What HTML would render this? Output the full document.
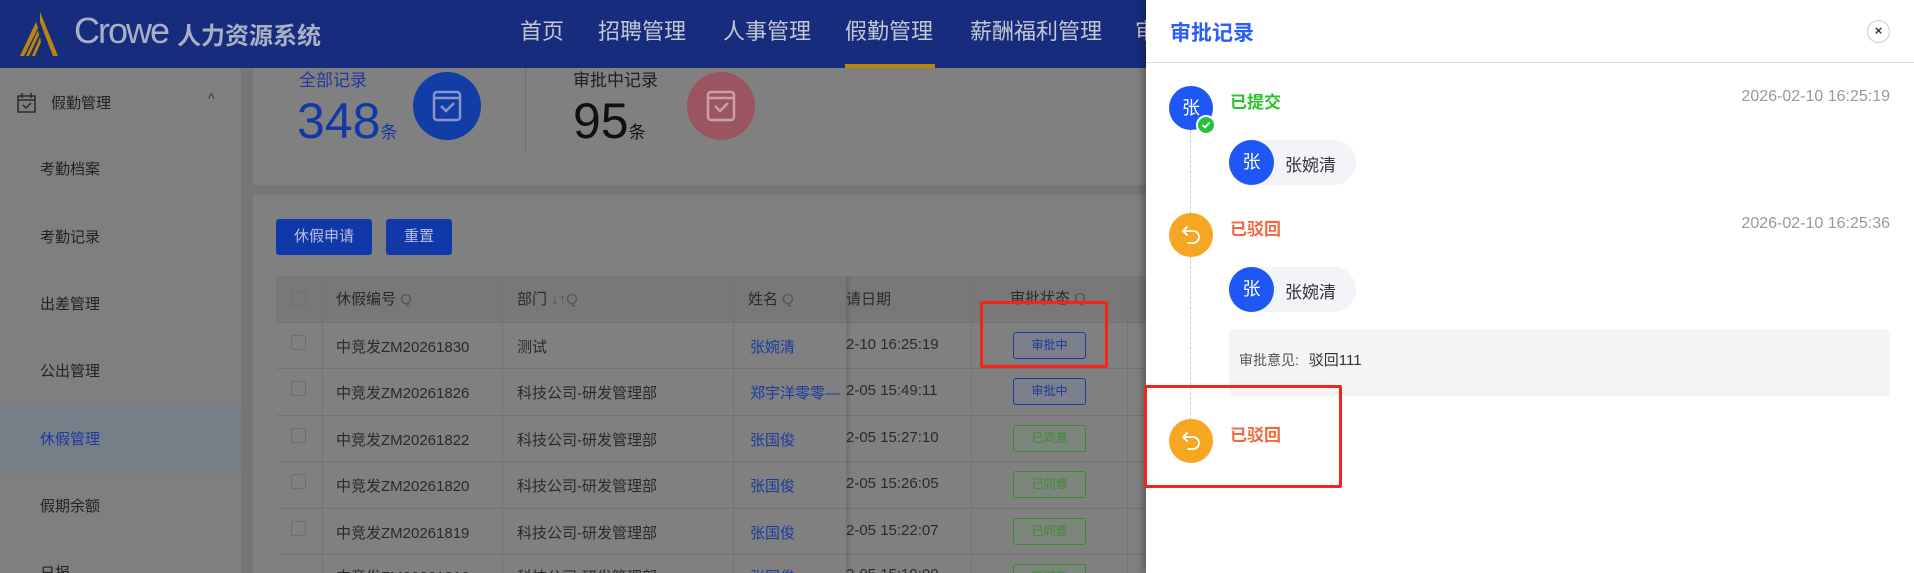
<!DOCTYPE html>
<html style="width:1914px;height:573px;overflow:hidden"><head><meta charset="utf-8"><style>
*{margin:0;padding:0;box-sizing:border-box}
body{width:1914px;height:573px;overflow:hidden;background:#767676;font-family:"Liberation Sans","Noto Sans CJK SC",sans-serif;position:relative;color:#1e1e1e}
.a{position:absolute;white-space:nowrap}
.hdr{left:0;top:0;width:1914px;height:68px;background:#172c7c}
.nav{top:14px;font-size:22px;color:#c4c7d2}
.side{left:0;top:68px;width:241px;height:505px;background:#7f7f7f}
.si{left:40px;font-size:15px;color:#222}
.card{background:#808080}
.th{font-size:15px;color:#2a2a2a}
.td{font-size:15px;color:#2a2a2a}
.nm{color:#1a3aa0}
.tag{width:73px;height:27px;border:1px solid;border-radius:3px;font-size:12px;text-align:center;line-height:25px}
.tb{border-color:#1a3aa0;color:#1a3aa0;background:#7c7f8c}
.tg{border-color:#3c8a2e;color:#3c8a2e;background:#7c867c}
.hl{height:1px;background:#747474}
.vl{width:1px;background:#747474}
.panel{left:1146px;top:0;width:768px;height:573px;background:#fff;box-shadow:-3px 0 8px rgba(0,0,0,.3)}
.av{width:44px;height:44px;border-radius:50%;background:#1f57f5;color:#fff;font-size:18px;text-align:center;line-height:44px}
.ov{background:#f5a623}
.chip{width:127px;height:45px;border-radius:23px;background:#f2f4f8}
</style></head><body>
<div class="a hdr"></div>
<svg class="a" style="left:16px;top:10px" width="50" height="48" viewBox="0 0 50 48"><path d="M24 2 L42 46 L37 46 L24 12 Z" fill="#b8860b"/><path d="M20 12 L4 46 L8 46 L22 18Z" fill="#b8860b"/><path d="M22 20 L10 46 L13 46 L23 25Z" fill="#b8860b"/><path d="M24 27 L16 46 L19 46 L25 32Z" fill="#b8860b"/></svg>
<div class="a" style="left:74px;top:10px;font-size:36px;color:#a9afc4;letter-spacing:-2px">Crowe</div>
<div class="a" style="left:177px;top:16px;font-size:24px;font-weight:bold;color:#a9afc4">人力资源系统</div>
<div class="a nav" style="left:520px">首页</div>
<div class="a nav" style="left:598px">招聘管理</div>
<div class="a nav" style="left:723px">人事管理</div>
<div class="a nav" style="left:845px">假勤管理</div>
<div class="a" style="left:845px;top:64px;width:90px;height:4px;background:#b8860b"></div>
<div class="a nav" style="left:970px">薪酬福利管理</div>
<div class="a nav" style="left:1135px">审</div>

<div class="a side"></div>
<svg class="a" style="left:16px;top:92px" width="22" height="22" viewBox="0 0 22 22" fill="none" stroke="#2a2a2a" stroke-width="1.5"><rect x="2" y="4" width="17" height="16"/><path d="M6 1v5M15 1v5M2 8h17M7 13l3 3 5-5"/></svg>
<div class="a si" style="left:51px;top:92px">假勤管理</div>
<div class="a" style="left:208px;top:90px;font-size:14px;color:#333">^</div>
<div class="a si" style="top:158px">考勤档案</div>
<div class="a si" style="top:226px">考勤记录</div>
<div class="a si" style="top:293px">出差管理</div>
<div class="a si" style="top:360px">公出管理</div>
<div class="a" style="left:0;top:406px;width:241px;height:67px;background:#767e87"></div>
<div class="a si" style="top:428px;color:#1a3aa0">休假管理</div>
<div class="a si" style="top:495px">假期余额</div>
<div class="a si" style="top:562px">日报</div>

<div class="a card" style="left:253px;top:68px;width:900px;height:117px"></div>
<div class="a" style="left:299px;top:66px;font-size:17px;color:#1a3aa0">全部记录</div>
<div class="a" style="left:297px;top:92px;font-size:50px;color:#1238a8">348<span style="font-size:17px">条</span></div>
<div class="a" style="left:413px;top:72px;width:68px;height:68px;border-radius:50%;background:#123ca6"></div>
<svg class="a" style="left:429px;top:88px" width="36" height="36" viewBox="0 0 36 36" fill="none" stroke="#8a96c4" stroke-width="2.5"><rect x="5" y="4" width="26" height="28" rx="3"/><path d="M5 10h26M12 18l5 5 8-8"/></svg>
<div class="a vl" style="left:525px;top:68px;height:86px;background:#6e6e6e"></div>
<div class="a" style="left:573px;top:66px;font-size:17px;color:#1e1e1e">审批中记录</div>
<div class="a" style="left:573px;top:92px;font-size:50px;color:#111">95<span style="font-size:17px">条</span></div>
<div class="a" style="left:687px;top:72px;width:68px;height:68px;border-radius:50%;background:#9a5560"></div>
<svg class="a" style="left:703px;top:88px" width="36" height="36" viewBox="0 0 36 36" fill="none" stroke="#c8a0a6" stroke-width="2.5"><rect x="5" y="4" width="26" height="28" rx="3"/><path d="M5 10h26M12 18l5 5 8-8"/></svg>

<div class="a card" style="left:253px;top:195px;width:900px;height:378px"></div>
<div class="a" style="left:276px;top:219px;width:96px;height:36px;border-radius:3px;background:#1138a8;color:#b8c0de;font-size:15px;text-align:center;line-height:36px">休假申请</div>
<div class="a" style="left:386px;top:219px;width:66px;height:36px;border-radius:3px;background:#1138a8;color:#b8c0de;font-size:15px;text-align:center;line-height:36px">重置</div>

<div class="a" style="left:276px;top:276px;width:870px;height:46px;background:#787878"></div>
<div class="a hl" style="left:276px;top:322px;width:870px"></div>
<div class="a hl" style="left:276px;top:368px;width:870px"></div>
<div class="a hl" style="left:276px;top:415px;width:870px"></div>
<div class="a hl" style="left:276px;top:461px;width:870px"></div>
<div class="a hl" style="left:276px;top:508px;width:870px"></div>
<div class="a hl" style="left:276px;top:554px;width:870px"></div>
<div class="a vl" style="left:322px;top:276px;height:297px"></div>
<div class="a vl" style="left:502px;top:276px;height:297px"></div>
<div class="a vl" style="left:733px;top:276px;height:297px"></div>
<div class="a vl" style="left:971px;top:276px;height:297px"></div>
<div class="a vl" style="left:1127px;top:276px;height:297px"></div>
<div class="a" style="left:846px;top:276px;width:6px;height:297px;background:linear-gradient(90deg,rgba(0,0,0,.12),rgba(0,0,0,0))"></div>

<div class="a th" style="left:336px;top:288px">休假编号 <span style="color:#555">Q</span></div>
<div class="a th" style="left:517px;top:288px">部门 <span style="color:#555">↓↑Q</span></div>
<div class="a th" style="left:748px;top:288px">姓名 <span style="color:#555">Q</span></div>
<div class="a th" style="left:846px;top:288px">请日期</div>
<div class="a th" style="left:1010px;top:287px">审批状态 <span style="color:#555">Q</span></div>

<div style="position:absolute;left:0;top:0">
<div class="a td" style="left:336px;top:336px">中竞发ZM20261830</div><div class="a td" style="left:517px;top:336px">测试</div><div class="a td nm" style="left:750px;top:336px">张婉清</div><div class="a td" style="left:846px;top:336px">2-10 16:25:19</div><div class="a tag tb" style="left:1013px;top:332px">审批中</div>
<div class="a td" style="left:336px;top:382px">中竞发ZM20261826</div><div class="a td" style="left:517px;top:382px">科技公司-研发管理部</div><div class="a td nm" style="left:750px;top:382px">郑宇洋零零—</div><div class="a td" style="left:846px;top:382px">2-05 15:49:11</div><div class="a tag tb" style="left:1013px;top:378px">审批中</div>
<div class="a td" style="left:336px;top:429px">中竞发ZM20261822</div><div class="a td" style="left:517px;top:429px">科技公司-研发管理部</div><div class="a td nm" style="left:750px;top:429px">张国俊</div><div class="a td" style="left:846px;top:429px">2-05 15:27:10</div><div class="a tag tg" style="left:1013px;top:425px">已同意</div>
<div class="a td" style="left:336px;top:475px">中竞发ZM20261820</div><div class="a td" style="left:517px;top:475px">科技公司-研发管理部</div><div class="a td nm" style="left:750px;top:475px">张国俊</div><div class="a td" style="left:846px;top:475px">2-05 15:26:05</div><div class="a tag tg" style="left:1013px;top:471px">已同意</div>
<div class="a td" style="left:336px;top:522px">中竞发ZM20261819</div><div class="a td" style="left:517px;top:522px">科技公司-研发管理部</div><div class="a td nm" style="left:750px;top:522px">张国俊</div><div class="a td" style="left:846px;top:522px">2-05 15:22:07</div><div class="a tag tg" style="left:1013px;top:518px">已同意</div>
<div class="a td" style="left:336px;top:566px">中竞发ZM20261816</div><div class="a td" style="left:517px;top:566px">科技公司-研发管理部</div><div class="a td nm" style="left:750px;top:566px">张国俊</div><div class="a td" style="left:846px;top:566px">2-05 15:19:00</div><div class="a tag tg" style="left:1013px;top:564px">已同意</div>
</div>
<div class="a" style="left:291px;top:335px;width:15px;height:15px;border:1px solid #6e6e6e;border-radius:2px"></div>
<div class="a" style="left:291px;top:291px;width:15px;height:15px;border:1px solid #6e6e6e;border-radius:2px"></div>
<div class="a" style="left:291px;top:381px;width:15px;height:15px;border:1px solid #6e6e6e;border-radius:2px"></div>
<div class="a" style="left:291px;top:428px;width:15px;height:15px;border:1px solid #6e6e6e;border-radius:2px"></div>
<div class="a" style="left:291px;top:474px;width:15px;height:15px;border:1px solid #6e6e6e;border-radius:2px"></div>
<div class="a" style="left:291px;top:521px;width:15px;height:15px;border:1px solid #6e6e6e;border-radius:2px"></div>
<div class="a" style="left:980px;top:301px;width:128px;height:67px;border:3px solid #f0261c;border-radius:2px"></div>

<div class="a panel"></div>
<div class="a" style="left:1170px;top:17px;font-size:21px;font-weight:bold;color:#2c5ff6">审批记录</div>
<div class="a" style="left:1867px;top:20px;width:23px;height:23px;border-radius:50%;border:1.5px solid #ccc;font-size:13px;font-weight:bold;text-align:center;line-height:20px;color:#333">×</div>
<div class="a" style="left:1146px;top:62px;width:768px;height:1px;background:#ddd"></div>
<div class="a" style="left:1190px;top:130px;height:290px;border-left:1.5px dashed #ccc"></div>

<div class="a av" style="left:1169px;top:86px">张</div>
<div class="a" style="left:1196px;top:115px;width:20px;height:20px;border-radius:50%;background:#22c23a;border:2px solid #fff"></div>
<svg class="a" style="left:1200px;top:119px" width="12" height="12" viewBox="0 0 12 12"><path d="M2.5 6l2.5 2.5 4.5-5" stroke="#fff" stroke-width="1.8" fill="none"/></svg>
<div class="a" style="left:1230px;top:88px;font-size:17px;font-weight:bold;color:#2bc32b">已提交</div>
<div class="a" style="right:24px;top:88px;font-size:16px;color:#999">2026-02-10 16:25:19</div>
<div class="a chip" style="left:1229px;top:140px"></div>
<div class="a av" style="left:1229px;top:140px;height:45px;width:45px">张</div>
<div class="a" style="left:1285px;top:151px;font-size:17px;color:#333">张婉清</div>

<div class="a av ov" style="left:1169px;top:213px"></div>
<svg class="a" style="left:1179px;top:223px" width="24" height="24" viewBox="0 0 24 24" fill="none" stroke="#fff" stroke-width="1.8" stroke-linecap="round"><path d="M8 4 L4 8 L8 12"/><path d="M4 8 H14 a6 6 0 0 1 0 12 H9"/></svg>
<div class="a" style="left:1230px;top:215px;font-size:17px;font-weight:bold;color:#f2683f">已驳回</div>
<div class="a" style="right:24px;top:215px;font-size:16px;color:#999">2026-02-10 16:25:36</div>
<div class="a chip" style="left:1229px;top:267px"></div>
<div class="a av" style="left:1229px;top:267px;height:45px;width:45px">张</div>
<div class="a" style="left:1285px;top:278px;font-size:17px;color:#333">张婉清</div>
<div class="a" style="left:1229px;top:329px;width:661px;height:67px;background:#f5f5f5;border-radius:4px"></div>
<div class="a" style="left:1239px;top:349px;font-size:14px;color:#555">审批意见: <span style="font-size:15px;color:#333;margin-left:6px">驳回111</span></div>

<div class="a av ov" style="left:1169px;top:419px"></div>
<svg class="a" style="left:1179px;top:429px" width="24" height="24" viewBox="0 0 24 24" fill="none" stroke="#fff" stroke-width="1.8" stroke-linecap="round"><path d="M8 4 L4 8 L8 12"/><path d="M4 8 H14 a6 6 0 0 1 0 12 H9"/></svg>
<div class="a" style="left:1230px;top:421px;font-size:17px;font-weight:bold;color:#f2683f">已驳回</div>
<div class="a" style="left:1144px;top:385px;width:198px;height:103px;border:3px solid #f0261c;border-radius:2px"></div>
</body></html>
